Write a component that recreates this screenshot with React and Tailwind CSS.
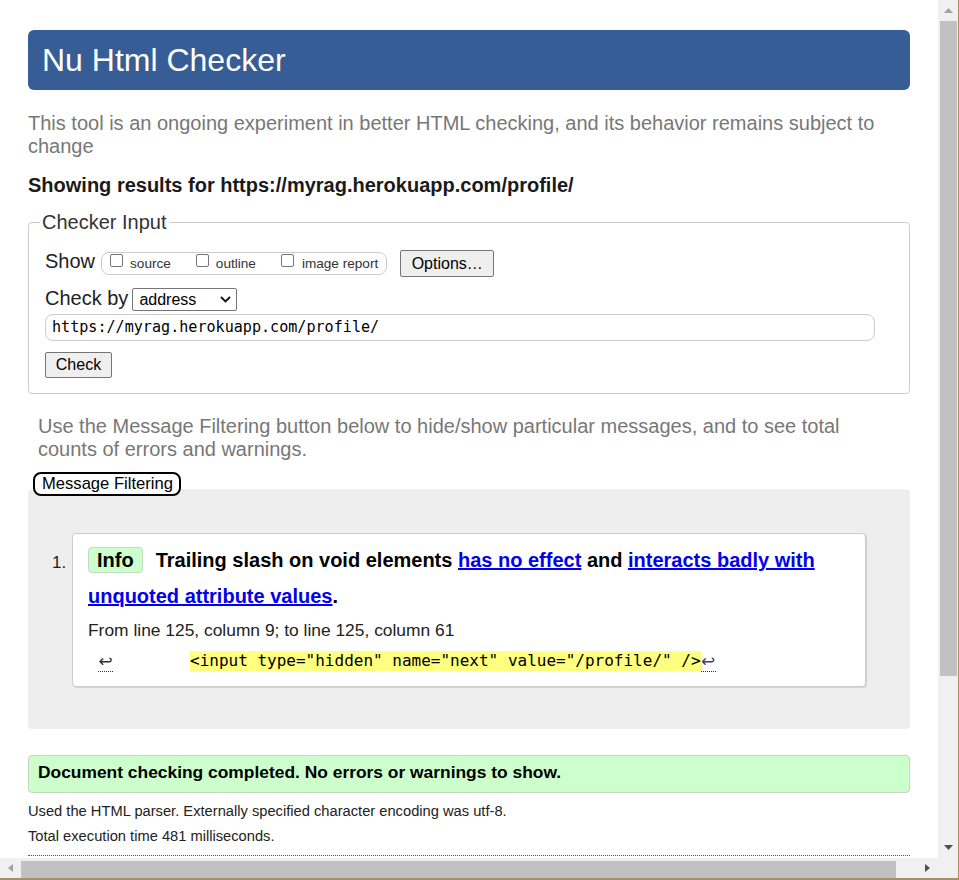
export default function App() {
  const cb = (
    <span className="mt-[1px] inline-block w-[13px] h-[13px] shrink-0 border border-[#767676] rounded-[2px] bg-white" />
  );
  return (
    <div className="w-[959px] h-[880px] flex flex-col overflow-hidden bg-white font-['Liberation_Sans',Arial,sans-serif] text-[#222]">
      <div className="flex h-[858px]">
        <div className="flex-1 overflow-hidden">
          <div className="pl-[28px] w-[910px]">
            <div className="mt-[30px] h-[60px] rounded-[6px] bg-[#365d95] flex items-center pl-[14px]">
              <h1 className="text-[32px] leading-[37px] text-white">Nu Html Checker</h1>
            </div>
            <p className="mt-[22px] text-[20px] leading-[23px] text-[#777]">
              This tool is an ongoing experiment in better HTML checking, and its behavior remains subject to change
            </p>
            <h2 className="mt-[16px] text-[20px] leading-[23px] font-bold text-[#1a1a1a]">
              Showing results for https://myrag.herokuapp.com/profile/
            </h2>
            <fieldset className="mt-[14px] border border-[#ccc] rounded-[4px] pl-[16px] pt-[16px] pb-[15px]">
              <legend className="-ml-[5px] px-[2px] text-[20px] leading-[23px] text-[#333]">Checker Input</legend>
              <div className="flex items-start h-[27px]">
                <span className="text-[20px] leading-[23px]">Show</span>
                <div className="ml-[6px] mt-[2px] h-[23px] border border-[#ccc] rounded-[8px] flex items-start pl-[8px] pr-[8px] text-[13.6px] text-[#333]">
                  {cb}
                  <span className="ml-[7px] mt-[3px] leading-[16px]">source</span>
                  <span className="ml-[25px] flex items-start">{cb}</span>
                  <span className="ml-[7px] mt-[3px] leading-[16px]">outline</span>
                  <span className="ml-[25px] flex items-start">{cb}</span>
                  <span className="ml-[8px] mt-[3px] leading-[16px]">image report</span>
                </div>
                <button className="ml-[13px] w-[94px] h-[27px] flex items-center justify-center bg-[#efefef] border border-[#767676] rounded-[2px] text-[16px] text-black">
                  Options…
                </button>
              </div>
              <div className="mt-[10px] flex items-start">
                <span className="text-[20px] leading-[23px]">Check by</span>
                <div className="ml-[4px] mt-[1px] w-[105px] h-[23px] border border-[#767676] rounded-[2px] bg-white flex items-center justify-between pl-[6px] pr-[5px] text-[16px] text-black">
                  <span>address</span>
                  <svg width="11" height="7" viewBox="0 0 11 7">
                    <path d="M1 1 L5.5 5.5 L10 1" stroke="#111" strokeWidth="1.8" fill="none" />
                  </svg>
                </div>
              </div>
              <div className="mt-[3px] w-[830px] h-[27px] border border-[#ccc] rounded-[8px] flex items-center pl-[6px] font-['DejaVu_Sans_Mono',monospace] text-[15.1px] text-black">
                https://myrag.herokuapp.com/profile/
              </div>
              <button className="mt-[11px] w-[67px] h-[26px] flex items-center justify-center bg-[#efefef] border border-[#767676] rounded-[2px] text-[16px] text-black">
                Check
              </button>
            </fieldset>
            <p className="mt-[21px] pl-[10px] pr-[10px] text-[20px] leading-[23px] text-[#777]">
              Use the Message Filtering button below to hide/show particular messages, and to see total counts of errors and warnings.
            </p>
            <button className="relative z-10 mt-[11px] ml-[5px] -mb-[7px] w-[148px] h-[24px] flex items-center pl-[7px] border-2 border-black rounded-[8px] bg-white text-[16.6px] text-black">
              Message Filtering
            </button>
            <div className="rounded-[4px] bg-[#eeeeee] pt-[44px] pb-[42px] pl-[24px] pr-[44px] flex items-start">
              <div className="w-[20px] mt-[20px] text-[17px] leading-[20px]">1.</div>
              <div className="flex-1 border border-[#ccc] rounded-[4px] bg-white pt-[8px] pl-[15px] pr-[15px] pb-[15px] shadow-[1px_1px_1px_rgba(0,0,0,0.12)]">
                <p className="text-[20px] leading-[36px] font-bold text-black">
                  <span className="inline-block leading-[24px] px-[8px] border border-[#c2dcc2] rounded-[4px] bg-[#ccffcc] mr-[13px]">Info</span>
                  Trailing slash on void elements{" "}
                  <a className="text-[#0000ee] underline">has no effect</a> and{" "}
                  <a className="text-[#0000ee] underline">interacts badly with unquoted attribute values</a>.
                </p>
                <p className="mt-[7px] text-[17.4px] leading-[18px]">From line 125, column 9; to line 125, column 61</p>
                <div className="mt-[12px] h-[20px] pl-[10px] flex items-start font-['DejaVu_Sans_Mono',monospace] text-[16px] text-black">
                  <span className="inline-block w-[15px] h-[21px] border-b border-dotted border-[#333] text-center leading-[20px] font-['DejaVu_Sans',sans-serif] text-[17px] text-[#333]">↩</span>
                  <span className="ml-[77px] inline-block h-[20px] leading-[20px] bg-[#ffff80] whitespace-pre">{'<input type="hidden" name="next" value="/profile/" />'}</span>
                  <span className="inline-block w-[15px] h-[21px] border-b border-dotted border-[#333] text-center leading-[20px] font-['DejaVu_Sans',sans-serif] text-[17px] text-[#4a3a6a]">↩</span>
                </div>
              </div>
            </div>
            <div className="mt-[26px] border border-[#c8d4c8] rounded-[4px] bg-[#ccffcc] pl-[9px] pt-[6px] pb-[9px] text-[17.4px] leading-[21px] font-bold text-black">
              Document checking completed. No errors or warnings to show.
            </div>
            <p className="mt-[10px] text-[14.7px] leading-[17px]">Used the HTML parser. Externally specified character encoding was utf-8.</p>
            <p className="mt-[8px] text-[14.7px] leading-[17px]">Total execution time 481 milliseconds.</p>
            <div className="mt-[10px] border-t border-dotted border-[#555]" />
            <div className="h-[40px]" />
          </div>
        </div>
        <div className="w-[20px] bg-[#f0f0f0] flex flex-col">
          <div className="h-[21px] flex items-center justify-center">
            <svg width="9" height="5" viewBox="0 0 9 5"><polygon points="4.5,0 9,5 0,5" fill="#a3a3a3" /></svg>
          </div>
          <div className="ml-[2px] w-[17px] h-[655px] bg-[#c1c1c1]" />
          <div className="flex-1" />
          <div className="h-[21px] flex items-center justify-center">
            <svg width="9" height="5" viewBox="0 0 9 5"><polygon points="0,0 9,0 4.5,5" fill="#505050" /></svg>
          </div>
        </div>
        <div className="w-[1px] bg-[#a8915e]" />
      </div>
      <div className="h-[22px] flex flex-col">
        <div className="h-[20px] flex">
          <div className="w-[938px] bg-[#f0f0f0] flex">
            <div className="w-[21px] flex items-center justify-center">
              <svg width="5" height="8" viewBox="0 0 5 8"><polygon points="5,0 5,8 0,4" fill="#a3a3a3" /></svg>
            </div>
            <div className="mt-[3px] w-[875px] h-[17px] bg-[#c1c1c1]" />
            <div className="flex-1" />
            <div className="w-[21px] flex items-center justify-center">
              <svg width="5" height="8" viewBox="0 0 5 8"><polygon points="0,0 5,4 0,8" fill="#505050" /></svg>
            </div>
          </div>
          <div className="w-[20px] bg-[#f0f0f0]" />
          <div className="w-[1px] bg-[#a8915e]" />
        </div>
        <div className="h-[2px] bg-[#a8915e]" />
      </div>
    </div>
  );
}
